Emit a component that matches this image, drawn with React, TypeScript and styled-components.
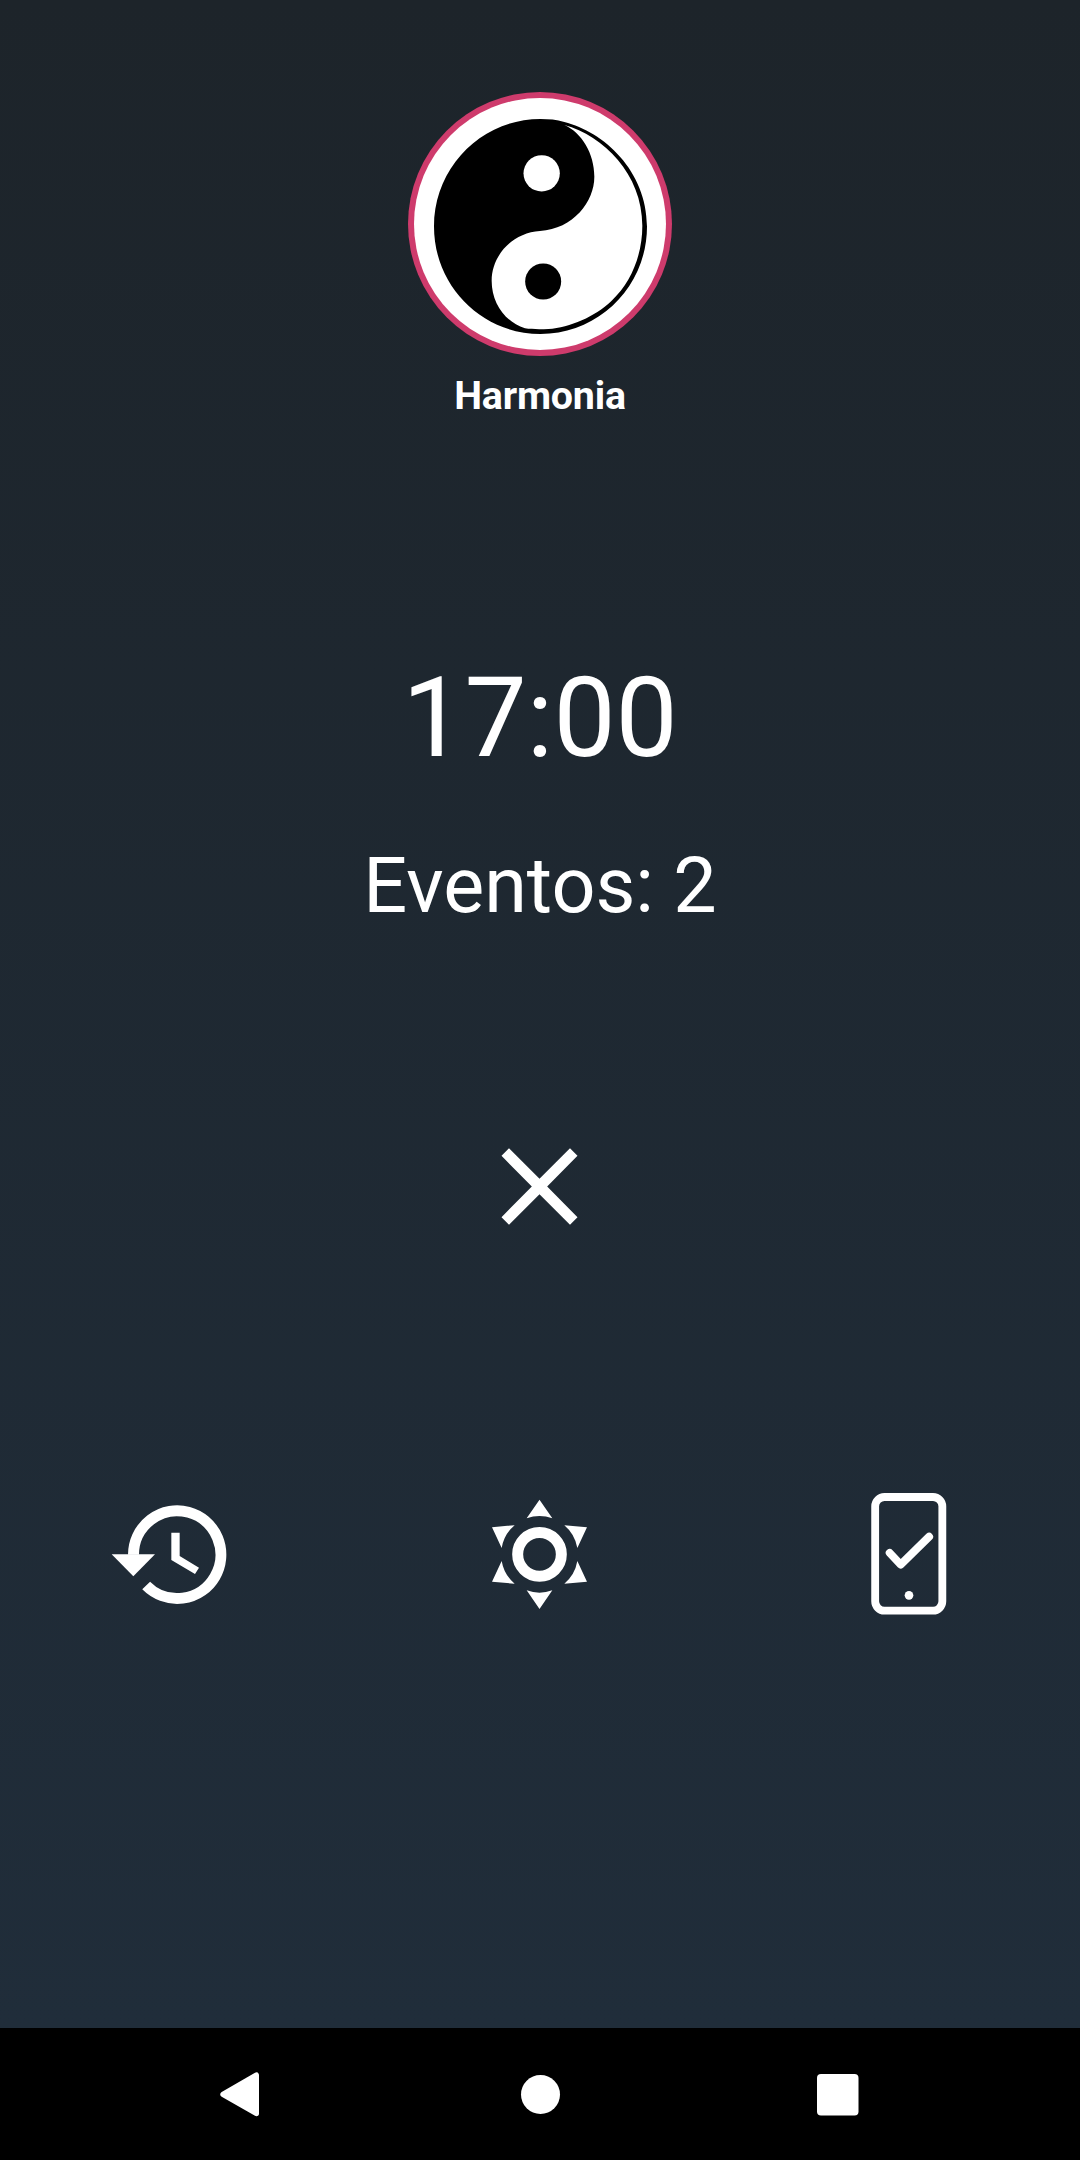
import React from "react";
import styled, { createGlobalStyle } from "styled-components";

const GlobalStyle = createGlobalStyle`
  html, body { margin: 0; padding: 0; background: #000; }
  * { box-sizing: border-box; }
  svg { display: block; flex: none; }
`;

const Phone = styled.div`
  width: 1080px;
  height: 2160px;
  display: flex;
  flex-direction: column;
  overflow: hidden;
  font-family: Roboto, "Liberation Sans", sans-serif;
  color: #fff;
`;

const Screen = styled.main`
  height: 2028px;
  display: flex;
  flex-direction: column;
  align-items: center;
  padding-top: 92px;
  background: linear-gradient(180deg, #1d242a 0%, #202d3a 100%);
`;

const Profile = styled.header`
  display: flex;
  flex-direction: column;
  align-items: center;
  gap: 17px;
  height: 562px;
`;

const Name = styled.div`
  font-size: 39.375px;
  line-height: 46px;
  font-weight: 700;
  letter-spacing: -0.2px;
`;

const Summary = styled.section`
  display: flex;
  flex-direction: column;
  align-items: center;
  gap: 59px;
  height: 466px;
`;

const Time = styled.div`
  font-size: 110.7px;
  line-height: 128px;
`;

const Events = styled.div`
  font-size: 77.3px;
  line-height: 90px;
`;

const IconButton = styled.button`
  display: flex;
  padding: 0;
  border: 0;
  background: none;
  color: inherit;
`;

const Actions = styled.nav`
  width: 100%;
  display: flex;
  justify-content: space-between;
  padding: 0 100px;
  margin-top: 240px;
`;

const SystemBar = styled.footer`
  height: 132px;
  display: flex;
  align-items: center;
  justify-content: space-between;
  padding: 0 215px;
  background: #000;
`;

const Avatar = () => (
  <svg width="264" height="264" viewBox="54 36 792 792">
    <circle cx="450" cy="432" r="396" fill="#ce3b6c" />
    <circle cx="450" cy="432" r="378" fill="#fff" />
    <path
      d="M451.5 117 C476 117 500 119 523 126 C640 155 771 272 771 439.500 C771 618 628 762 451.500 762 C275 762 132 618 132 439.500 C132 261 275 117 451.500 117 Z"
      fill="#000"
    />
    <path
      d="M523 135 C575 158 613 220 613 290 C613 365 550 446 450 453 C368 458 305 526 305 602 C305 670 345 725 405 745 C425 748 450 748 475 747 C540 742 615 710 665 662 C725 606 757 522 757 437 C757 282 640 167 523 135 Z"
      fill="#fff"
    />
    <circle cx="455" cy="280" r="54.5" fill="#fff" />
    <circle cx="459.500" cy="604.500" r="54" fill="#000" />
  </svg>
);

const CloseIcon = () => (
  <svg width="120" height="120" viewBox="0 0 360 360" fill="currentColor">
    <path d="M87 85 L178.500 176.500 L270 85 L292.500 107.500 L201.500 199.500 L292.500 291.500 L270 314 L178.500 222.500 L87 314 L64.500 291.500 L155.500 199.500 L64.500 107.500 Z" />
  </svg>
);

const HistoryIcon = () => (
  <svg width="130" height="140" viewBox="0 0 390 420" fill="currentColor">
    <path
      d="M100.500 224 A131 131.500 0 1 1 138.500 316.500"
      fill="none"
      stroke="currentColor"
      strokeWidth="33"
    />
    <path d="M35 223 H165 L100 289 Z" />
    <path d="M214 158 H239 V228 L297 263 L285 282 L214 240 Z" />
  </svg>
);

const SunIcon = () => (
  <svg width="140" height="140" viewBox="0 0 420 420" fill="currentColor">
    <circle cx="208.500" cy="223" r="65.500" fill="none" stroke="currentColor" strokeWidth="33" />
    <path d="M208.500 59 L247 115 A114 114 0 0 0 170 115 Z" />
    <path d="M208.500 387 L170 331 A114 114 0 0 0 247 331 Z" />
    <path d="M351 141.500 L322 204 A114 114 0 0 0 283 135.500 Z" />
    <path d="M351 305.500 L283 311 A114 114 0 0 0 322 243 Z" />
    <path d="M66 141.500 L134 135.500 A114 114 0 0 0 95 204 Z" />
    <path d="M66 305.500 L95 243 A114 114 0 0 0 134 311 Z" />
  </svg>
);

const PhoneCheckIcon = () => (
  <svg
    width="130"
    height="140"
    viewBox="0 0 390 420"
    fill="none"
    stroke="currentColor"
    strokeWidth="23.500"
    strokeLinecap="round"
  >
    <rect x="75.500" y="51" width="201.500" height="341" rx="28" />
    <path d="M119 218.500 L152 254 L237.500 170" strokeLinejoin="round" />
    <circle cx="177" cy="346" r="13" fill="currentColor" stroke="none" />
  </svg>
);

const BackIcon = () => (
  <svg width="50" height="50" viewBox="0 0 150 150">
    <path
      d="M24 76 L124 18.500 V133.500 Z"
      fill="#fff"
      stroke="#fff"
      strokeWidth="16"
      strokeLinejoin="round"
    />
  </svg>
);

const HomeIcon = () => (
  <svg width="50" height="50" viewBox="0 0 50 50">
    <circle cx="25.500" cy="25.500" r="19.500" fill="#fff" />
  </svg>
);

const RecentsIcon = () => (
  <svg width="50" height="50" viewBox="0 0 50 50">
    <rect x="2" y="5" width="41.500" height="41.500" rx="4" fill="#fff" />
  </svg>
);

export default function App() {
  return (
    <>
      <GlobalStyle />
      <Phone>
        <Screen>
          <Profile>
            <Avatar />
            <Name>Harmonia</Name>
          </Profile>
          <Summary>
            <Time>17:00</Time>
            <Events>Eventos: 2</Events>
          </Summary>
          <IconButton aria-label="Fechar">
            <CloseIcon />
          </IconButton>
          <Actions>
            <IconButton aria-label="Histórico">
              <HistoryIcon />
            </IconButton>
            <IconButton aria-label="Tema">
              <SunIcon />
            </IconButton>
            <IconButton aria-label="Dispositivo">
              <PhoneCheckIcon />
            </IconButton>
          </Actions>
        </Screen>
        <SystemBar>
          <IconButton aria-label="Voltar">
            <BackIcon />
          </IconButton>
          <IconButton aria-label="Início">
            <HomeIcon />
          </IconButton>
          <IconButton aria-label="Recentes">
            <RecentsIcon />
          </IconButton>
        </SystemBar>
      </Phone>
    </>
  );
}
